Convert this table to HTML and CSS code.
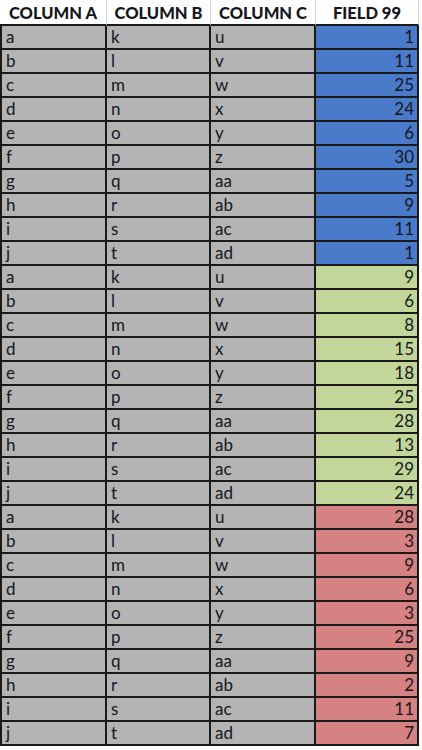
FILE: index.html
```html
<!DOCTYPE html>
<html lang="en">

<head>
    <meta charset="UTF-8" />
    <title>Sheet</title>
    <link rel="stylesheet" href="styles.css">
</head>

<body>
    <table class="sheet">
        <colgroup>
            <col class="col-a">
            <col class="col-b">
            <col class="col-c">
            <col class="col-d">
        </colgroup>
        <thead>
            <tr>
                <th>COLUMN A</th>
                <th>COLUMN B</th>
                <th>COLUMN C</th>
                <th>FIELD 99</th>
            </tr>
        </thead>
        <tbody>
            <tr><td>a</td><td>k</td><td>u</td><td class="num blue">1</td></tr>
            <tr><td>b</td><td>l</td><td>v</td><td class="num blue">11</td></tr>
            <tr><td>c</td><td>m</td><td>w</td><td class="num blue">25</td></tr>
            <tr><td>d</td><td>n</td><td>x</td><td class="num blue">24</td></tr>
            <tr><td>e</td><td>o</td><td>y</td><td class="num blue">6</td></tr>
            <tr><td>f</td><td>p</td><td>z</td><td class="num blue">30</td></tr>
            <tr><td>g</td><td>q</td><td>aa</td><td class="num blue">5</td></tr>
            <tr><td>h</td><td>r</td><td>ab</td><td class="num blue">9</td></tr>
            <tr><td>i</td><td>s</td><td>ac</td><td class="num blue">11</td></tr>
            <tr><td>j</td><td>t</td><td>ad</td><td class="num blue">1</td></tr>

            <tr><td>a</td><td>k</td><td>u</td><td class="num green">9</td></tr>
            <tr><td>b</td><td>l</td><td>v</td><td class="num green">6</td></tr>
            <tr><td>c</td><td>m</td><td>w</td><td class="num green">8</td></tr>
            <tr><td>d</td><td>n</td><td>x</td><td class="num green">15</td></tr>
            <tr><td>e</td><td>o</td><td>y</td><td class="num green">18</td></tr>
            <tr><td>f</td><td>p</td><td>z</td><td class="num green">25</td></tr>
            <tr><td>g</td><td>q</td><td>aa</td><td class="num green">28</td></tr>
            <tr><td>h</td><td>r</td><td>ab</td><td class="num green">13</td></tr>
            <tr><td>i</td><td>s</td><td>ac</td><td class="num green">29</td></tr>
            <tr><td>j</td><td>t</td><td>ad</td><td class="num green">24</td></tr>

            <tr><td>a</td><td>k</td><td>u</td><td class="num red">28</td></tr>
            <tr><td>b</td><td>l</td><td>v</td><td class="num red">3</td></tr>
            <tr><td>c</td><td>m</td><td>w</td><td class="num red">9</td></tr>
            <tr><td>d</td><td>n</td><td>x</td><td class="num red">6</td></tr>
            <tr><td>e</td><td>o</td><td>y</td><td class="num red">3</td></tr>
            <tr><td>f</td><td>p</td><td>z</td><td class="num red">25</td></tr>
            <tr><td>g</td><td>q</td><td>aa</td><td class="num red">9</td></tr>
            <tr><td>h</td><td>r</td><td>ab</td><td class="num red">2</td></tr>
            <tr><td>i</td><td>s</td><td>ac</td><td class="num red">11</td></tr>
            <tr><td>j</td><td>t</td><td>ad</td><td class="num red">7</td></tr>
        </tbody>
    </table>
</body>

</html>
```

FILE: styles.css
```css
body {
    margin: 0;
    background-color: #ffffff;
    color: #161620;
    font-family: Lato, "Open Sans", sans-serif;
}

.sheet {
    border-collapse: separate;
    border-spacing: 0;
    table-layout: fixed;
    width: 419px;
}

.col-a {
    width: 107px;
}

.col-b {
    width: 104px;
}

.col-c {
    width: 105px;
}

.col-d {
    width: 103px;
}

th {
    height: 23px;
    padding: 1px 0 0 0;
    font-size: 16.5px;
    font-weight: 900;
    text-align: center;
    vertical-align: middle;
    border-right: 1px solid #d6d6d6;
    border-bottom: 2px solid #1a1a1a;
}

td {
    height: 22px;
    padding: 0 0 0 4px;
    font-size: 17px;
    line-height: 22px;
    background-color: #b4b4b4;
    border-right: 2px solid #1a1a1a;
    border-bottom: 2px solid #1a1a1a;
    overflow: hidden;
}

td:first-child {
    border-left: 2px solid #1a1a1a;
}

/* value column */
.num {
    text-align: right;
    padding: 0 3px 0 0;
}

.blue {
    background-color: #4a7bcb;
}

.green {
    background-color: #c2d69a;
}

.red {
    background-color: #d68182;
}
```
